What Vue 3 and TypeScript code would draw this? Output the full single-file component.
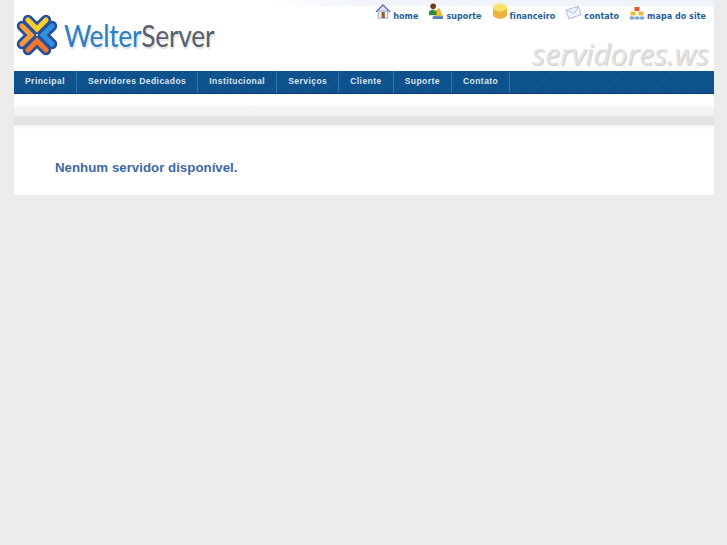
<script setup lang="ts">
const topLinks = [
  { label: 'home', icon: 'home' },
  { label: 'suporte', icon: 'suporte' },
  { label: 'financeiro', icon: 'financeiro' },
  { label: 'contato', icon: 'contato' },
  { label: 'mapa do site', icon: 'mapa' },
]

const menu = ['Principal', 'Servidores Dedicados', 'Institucional', 'Serviços', 'Cliente', 'Suporte', 'Contato']
</script>

<template>
  <div class="page">
    <header class="header">
      <div class="brand">
        <svg class="logo" width="42" height="42" viewBox="0 0 42 42">
          <g fill="none" stroke="#27509a" stroke-width="10.5" stroke-linecap="round" stroke-linejoin="round">
            <path d="M12 6 L21 15 L30 6" />
            <path d="M36 12 L27 21 L36 30" />
            <path d="M12 36 L21 27 L30 36" />
            <path d="M6 12 L15 21 L6 30" />
          </g>
          <g fill="none" stroke-width="5.2" stroke-linecap="round" stroke-linejoin="miter">
            <path d="M12 6 L21 15 L30 6" stroke="#f7cf2e" />
            <path d="M36 12 L27 21 L36 30" stroke="#2f8fe0" />
            <path d="M12 36 L21 27 L30 36" stroke="#f4752c" />
            <path d="M6 12 L15 21 L6 30" stroke="#f79a3c" />
          </g>
        </svg>
        <span class="brand-name"><span class="welter">Welter</span><span class="server">Server</span></span>
      </div>
      <div class="header-right">
        <nav class="top-links">
          <a v-for="link in topLinks" :key="link.label" class="top-link">
            <svg v-if="link.icon === 'home'" class="top-icon" width="16" height="17" viewBox="0 0 17 17">
              <path d="M1 9 L8.5 1.5 L16 9" fill="#dfe6f5" stroke="#5a78b8" stroke-width="1.4" />
              <rect x="3.5" y="8" width="10" height="7.5" fill="#f6f6f2" stroke="#8fa3cf" />
              <rect x="7" y="9" width="3.4" height="6.5" fill="#a5562a" />
            </svg>
            <svg v-else-if="link.icon === 'suporte'" class="top-icon" width="16" height="17" viewBox="0 0 17 18">
              <path d="M8 8 L12 5 L16 14 L8 15Z" fill="#f0b93a" />
              <circle cx="5.5" cy="3.5" r="3" fill="#6e3a1a" />
              <path d="M1 13 L1 9 Q5 5.5 9 9 L9 13Z" fill="#2e8c3a" />
              <rect x="5" y="14" width="11" height="3" fill="#5a78c8" />
            </svg>
            <svg v-else-if="link.icon === 'financeiro'" class="top-icon" width="16" height="17" viewBox="0 0 15 17">
              <path d="M0.5 4 L0.5 13 Q7.5 19 14.5 13 L14.5 4Z" fill="#eeb23c" />
              <ellipse cx="7.5" cy="4.5" rx="7" ry="4" fill="#fbe26c" />
            </svg>
            <svg v-else-if="link.icon === 'contato'" class="top-icon" width="17" height="15" viewBox="0 0 18 15">
              <path d="M1 5 L14 1 L17 10 L4 14Z" fill="#f1f5fc" stroke="#a7bbdf" />
              <path d="M1 5 L10 8.5 L14 1" fill="none" stroke="#a7bbdf" />
            </svg>
            <svg v-else class="top-icon" width="16" height="14" viewBox="0 0 16 14">
              <rect x="5.5" y="1" width="5" height="4" fill="#e8552f" />
              <rect x="1.5" y="5.5" width="5" height="4" fill="#f0b93a" />
              <rect x="9.5" y="5.5" width="5" height="4" fill="#f0b93a" />
              <ellipse cx="3" cy="12" rx="2.6" ry="1.8" fill="#7ea4d8" />
              <ellipse cx="8" cy="12" rx="2.6" ry="1.8" fill="#7ea4d8" />
              <ellipse cx="13" cy="12" rx="2.6" ry="1.8" fill="#7ea4d8" />
            </svg>
            <span>{{ link.label }}</span>
          </a>
        </nav>
        <div class="domain">servidores.ws</div>
      </div>
    </header>

    <ul class="menu">
      <li v-for="item in menu" :key="item">{{ item }}</li>
    </ul>

    <div class="divider"><div class="divider-band"></div></div>

    <main class="content">
      <h1>Nenhum servidor disponível.</h1>
    </main>
  </div>
</template>

<style scoped>
.page {
  width: 700px;
  margin-left: 14px;
  background: #fff;
}

.header {
  height: 71px;
  display: flex;
  justify-content: space-between;
  background:
    linear-gradient(90deg, #fff 254px, #f2f6fb 340px, #eef3f9 100%) top / 100% 6px no-repeat,
    #fff;
}

.brand {
  display: flex;
  align-items: flex-start;
  padding: 14px 0 0 2px;
  gap: 6px;
}

.logo {
  flex: none;
}

.brand-name {
  display: inline-block;
  transform: scaleX(0.88);
  transform-origin: left center;
  font-family: 'Lato', sans-serif;
  font-size: 30px;
  line-height: 42px;
  letter-spacing: -0.3px;
  text-shadow: 1px 2px 2px #d4dbe6;
}

.welter {
  color: #2a7fc4;
}

.server {
  color: #5a6068;
}

.header-right {
  display: flex;
  flex-direction: column;
  align-items: flex-end;
}

.top-links {
  display: flex;
  align-items: flex-end;
  height: 22px;
  padding-right: 8px;
  gap: 10px;
}

.top-link {
  display: flex;
  align-items: flex-end;
  gap: 2px;
  color: #1f5f97;
  font-family: 'DejaVu Sans', sans-serif;
  font-size: 8px;
  font-weight: 700;
  letter-spacing: 0.04px;
  line-height: 11px;
}

.top-icon {
  flex: none;
  margin-bottom: 2px;
}

.domain {
  margin-top: 15px;
  padding-right: 5px;
  color: #e2e2e2;
  font-family: 'Open Sans', sans-serif;
  font-style: italic;
  font-size: 30px;
  line-height: 34px;
  text-shadow: 1px 1px 1px #cccccc;
}

.menu {
  display: flex;
  height: 22px;
  margin: 0;
  padding: 0;
  list-style: none;
  border-bottom: 1px solid #0a3c70;
  background: repeating-linear-gradient(135deg, #11588f 0 1px, #0c4f8c 1px 3px);
}

.menu li {
  padding: 0 11px;
  border-right: 1px solid #2f74b0;
  color: #dbe6f0;
  font-family: 'Liberation Sans', sans-serif;
  font-size: 8.5px;
  font-weight: 700;
  letter-spacing: 0.45px;
  line-height: 21px;
}

.divider {
  height: 35px;
  background: linear-gradient(#fff 0 12px, #f6f6f6 12px, #f2f2f2 22px, #f6f6f6 32px, #fff 100%);
  padding-top: 22px;
  box-sizing: border-box;
}

.divider-band {
  height: 9px;
  background: #e2e2e2;
}

.content {
  height: 66px;
  padding: 30px 0 0 41px;
  box-sizing: border-box;
}

.content h1 {
  margin: 0;
  color: #3f68a8;
  font-family: 'Liberation Sans', sans-serif;
  font-size: 13.3px;
  font-weight: 700;
  line-height: 18px;
}
</style>

<style>
html,
body {
  background: #ececec;
}
</style>
